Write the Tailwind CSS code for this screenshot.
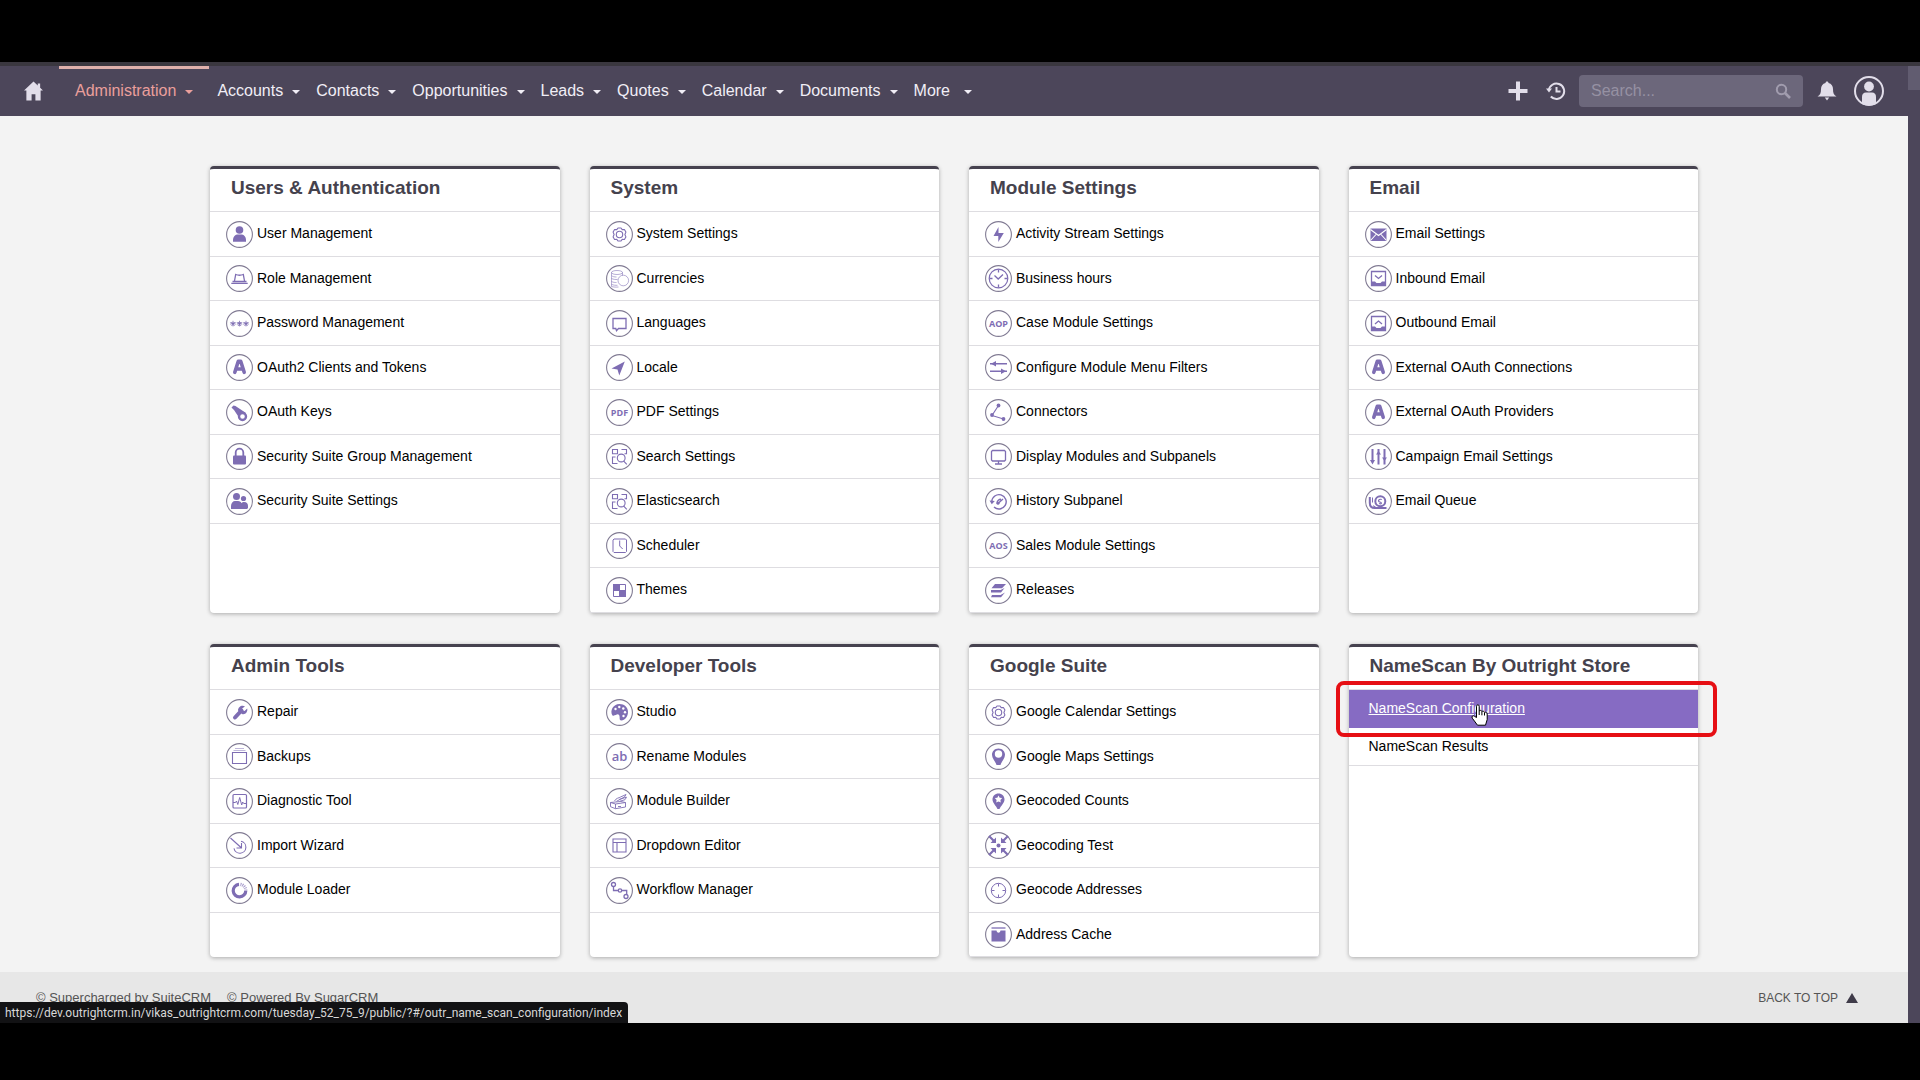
<!DOCTYPE html>
<html lang="en">

<head>
  <meta charset="UTF-8">
  <meta name="viewport" content="width=device-width, initial-scale=1.0">
  <title>Administration</title>
  <script src="https://cdn.jsdelivr.net/npm/@tailwindcss/browser@4"></script>
</head>

<body class="min-h-screen bg-black pt-[62px] pb-[57px] flex flex-col font-['Liberation_Sans',Arial,sans-serif]">

  <!-- Icons -->
  <svg class="hidden" xmlns="http://www.w3.org/2000/svg">
    <symbol id="user" viewBox="0 0 27 27"><circle cx="13.5" cy="9" r="3.8" fill="currentColor"/><path d="M7 20.8v-2c0-3 2-5 4-5.300h5c2 .3 4 2.300 4 5.300v2z" fill="currentColor"/></symbol>
    <symbol id="role" viewBox="0 0 27 27"><path d="M8.300 17l1.400-7.500c2 .8 5.600.8 7.600 0l1.400 7.500M5.300 18.300h16.400M6.500 16.500h14" fill="none" stroke="currentColor" stroke-width="1.300"/></symbol>
    <symbol id="password" viewBox="0 0 27 27"><path d="M7 10.800v5.600M4.300 12.600l5.400 1.600M9.700 12.600l-5.400 1.600M5.500 16l3-4M8.500 16l-3-4M13.500 10.800v5.600M10.800 12.600l5.400 1.600M16.200 12.600l-5.400 1.600M12 16l3-4M15 16l-3-4M20 10.800v5.600M17.300 12.600l5.400 1.600M22.700 12.600l-5.400 1.600M18.500 16l3-4M21.500 16l-3-4" fill="none" stroke="currentColor" stroke-width=".8"/></symbol>
    <symbol id="oauth" viewBox="0 0 27 27"><path d="M8.800 18.300L12.300 7.300h2.400l3.500 11M10.500 15h6" fill="none" stroke="currentColor" stroke-width="3.600" stroke-linecap="round" stroke-linejoin="round"/></symbol>
    <symbol id="key" viewBox="0 0 27 27"><path d="M5.500 8.500l2-2 2 .5L20 14l-6 6-6-9z" fill="currentColor"/><circle cx="16.500" cy="17.500" r="3.500" fill="white" stroke="currentColor" stroke-width="2.400"/></symbol>
    <symbol id="lock" viewBox="0 0 27 27"><rect x="7" y="12.500" width="13" height="9" rx="1" fill="currentColor"/><path d="M9.700 13V9.500a3.800 3.800 0 0 1 7.600 0V13" fill="none" stroke="currentColor" stroke-width="1.800"/></symbol>
    <symbol id="group" viewBox="0 0 27 27"><g fill="currentColor"><circle cx="10.500" cy="8.500" r="3.500"/><circle cx="17.500" cy="10.500" r="2.600"/><path d="M5 21v-3c0-3 2-5 4-5h3c2 0 3 1 3.500 2.200.8-1 1.500-1.200 2.500-1.200 3 0 4 2 4 4v2l-1 1z"/></g></symbol>
    <symbol id="gear" viewBox="0 0 27 27"><g fill="none" stroke="currentColor" stroke-width="1.100" stroke-linejoin="round"><path d="M12 7h3l1.200 1.600 2.200-.1 1.500 2.600-1 2.400 1 2.400-1.500 2.600-2.200-.1L15 20h-3l-1.200-1.600-2.200.1-1.500-2.600 1-2.400-1-2.400 1.500-2.600 2.200.1z"/><circle cx="13.500" cy="13.500" r="3.200"/></g></symbol>
    <symbol id="coins" viewBox="0 0 27 27"><g fill="none" stroke="currentColor" stroke-width=".7" stroke-opacity=".8"><ellipse cx="11" cy="7.500" rx="5.500" ry="2"/><path d="M5.500 7.500v3c1 1.200 3 1.500 5 1.500M5.500 10.500v11M16.500 7.500v3M5.500 13.500c2 1 4 1 6 1M5.500 16.500c2 1 3.500 1 5 1M5.500 19.300c2 1 4 1 6 1M5.500 21.500c2 .7 5 .7 7 .5"/><circle cx="17.300" cy="15.500" r="5.300"/></g></symbol>
    <symbol id="speech" viewBox="0 0 27 27"><path d="M7 8.500h13v10h-7.500l-2 2.300-.7-2.300H7z" fill="none" stroke="currentColor" stroke-width="1.300"/></symbol>
    <symbol id="locale" viewBox="0 0 27 27"><path d="M18.800 7.500L5.500 14.500l6 1 1.800 6z" fill="currentColor"/></symbol>
    <symbol id="pdf" viewBox="0 0 27 27"><text x="13.500" y="16.700" font-family="Open Sans" font-weight="700" font-size="9" text-anchor="middle" fill="currentColor">PDF</text></symbol>
    <symbol id="search-grid" viewBox="0 0 27 27"><g fill="none" stroke="currentColor" stroke-width="1.100"><path d="M6.500 6.500h5v4.300h-5zM15.500 6.500h5v4.300h-2M9.500 14h-3v6.500h5M17.500 17.800l3.300 3.500"/><circle cx="15.200" cy="15" r="3.900"/></g></symbol>
    <symbol id="scheduler" viewBox="0 0 27 27"><path d="M8 7h11.500l1 1v11.500l-1 1H8l-1-1V8zM13.700 8.500V14l3 3" fill="none" stroke="currentColor"/></symbol>
    <symbol id="themes" viewBox="0 0 27 27"><path d="M7.500 7.500h12v12h-12zM13.500 7.500v12M7.500 13.500h12" fill="none" stroke="currentColor"/><path d="M7 7h6.500v6.500H7zM13.500 13.500H20V20h-6.500z" fill="currentColor"/></symbol>
    <symbol id="bolt" viewBox="0 0 27 27"><path d="M13.500 6L8.500 15h4.800v6L18.800 12h-5.300z" fill="currentColor"/></symbol>
    <symbol id="hours" viewBox="0 0 27 27"><g fill="none" stroke="currentColor"><circle cx="13.500" cy="13.500" r="9.300" stroke-width="1.200"/><path d="M9.500 10.500l3.700 3.500 4.800-4.500M13.500 4.500v3M13.500 19.500v3M4.500 13.500h3M19.500 13.500h3" stroke-width="1.300"/></g></symbol>
    <symbol id="aop" viewBox="0 0 27 27"><text x="13.500" y="16.700" font-family="Open Sans" font-weight="700" font-size="9" text-anchor="middle" fill="currentColor">AOP</text></symbol>
    <symbol id="filters" viewBox="0 0 27 27"><path d="M5 9.700h17M5 17.300h17" stroke="currentColor" stroke-width="1.500"/><path d="M6 9.700l5-2.700v5.400zM21 17.300l-5-2.700V20z" fill="currentColor"/></symbol>
    <symbol id="connectors" viewBox="0 0 27 27"><path d="M13.500 6.500l-6.500 10 11.500 3.500" fill="none" stroke="currentColor" stroke-width="1.100"/><g fill="currentColor"><circle cx="13.500" cy="6.500" r="1.900"/><circle cx="7" cy="16" r="1.900"/><circle cx="18.500" cy="20" r="1.900"/></g></symbol>
    <symbol id="display" viewBox="0 0 27 27"><path d="M7.500 7.500h12l1 1V17l-1 1h-12l-1-1V8.500zM13.500 18v3M10 21h7" fill="none" stroke="currentColor" stroke-width="1.300"/></symbol>
    <symbol id="history" viewBox="0 0 27 27"><path d="M6.800 13.500a7.200 7.200 0 1 1 2.200 5.500M13.500 15l4.500-4M16 11.300a4 4 0 0 0-4 4.200" fill="none" stroke="currentColor" stroke-width="1.400"/><path d="M4.500 12.500l2.300 3.700 3-3.200z" fill="currentColor"/><circle cx="13" cy="15.300" r="1.500" fill="currentColor"/></symbol>
    <symbol id="aos" viewBox="0 0 27 27"><text x="13.500" y="16.700" font-family="Open Sans" font-weight="700" font-size="9" text-anchor="middle" fill="currentColor">AOS</text></symbol>
    <symbol id="releases" viewBox="0 0 27 27"><path d="M10 7h11l-4 4.300H6.500zM6 13h9.500l4-2-3.500 4.500H6zM7 18h8.500l4.500-2.500L16 20.300H6z" fill="currentColor"/></symbol>
    <symbol id="mail" viewBox="0 0 27 27"><rect x="5.500" y="7.500" width="16" height="12.500" fill="currentColor"/><path d="M5.500 8.500l8 6 8-6M5.500 19.500l5.500-6M21.500 19.500l-5.500-6" fill="none" stroke="white" stroke-width="1.100"/></symbol>
    <symbol id="inbound" viewBox="0 0 27 27"><path d="M6.500 6.500h14v14h-14zM10 10.500l3.500 3 3.500-3" fill="none" stroke="currentColor" stroke-width="1.300"/><path d="M6 16.500h4l1.500 1.500h4l1.500-1.500h4V21H6z" fill="currentColor"/></symbol>
    <symbol id="outbound" viewBox="0 0 27 27"><path d="M6.500 6.500h14v14h-14zM10 14l3.500-3 3.500 3" fill="none" stroke="currentColor" stroke-width="1.300"/><path d="M6 16.500h4l1.500 1.500h4l1.500-1.500h4V21H6z" fill="currentColor"/></symbol>
    <symbol id="sliders" viewBox="0 0 27 27"><path d="M7.500 6v12M13.500 6v15.500M19.500 6v15.500" stroke="currentColor" stroke-width="2"/><path d="M5 17h5l-2.500 4.500zM11 11.500l2.500-3.500 2.500 3.500zM17 14.500h5l-2.500 3.500z" fill="currentColor"/></symbol>
    <symbol id="snail" viewBox="0 0 27 27"><path d="M4.800 9v6c0 3 1.500 5 5 5H21" fill="none" stroke="currentColor" stroke-width="2"/><path d="M7.500 9.500v5" stroke="currentColor"/><circle cx="15.300" cy="13.300" r="5" fill="white" stroke="currentColor" stroke-width="2"/><path d="M16.800 11.500c-3-1-4.500 2-2 2.500s2 2.500-.8 1.500" fill="none" stroke="currentColor" stroke-width="1.200"/><path d="M8 17l3 2h10l1.500 1.500H9z" fill="currentColor"/></symbol>
    <symbol id="wrench" viewBox="0 0 27 27"><path d="M9 18.500l6.500-7" stroke="currentColor" stroke-width="4" stroke-linecap="round"/><path d="M19 7.200l-3 2.600.7 1.800 1.900.5 2.600-2.500c.8 3.500-2 6.400-5.200 5.400l-4-3.500C12 8 15.500 5.500 19 7.200z" fill="currentColor"/></symbol>
    <symbol id="backups" viewBox="0 0 27 27"><path d="M6.500 9.500h14V20.500h-14z" fill="none" stroke="currentColor" stroke-width="1.100"/><path d="M7.500 7.500h12M9 5.500h9" stroke="currentColor" stroke-opacity=".5"/></symbol>
    <symbol id="diagnostic" viewBox="0 0 27 27"><rect x="7" y="6.500" width="13.500" height="13.500" rx="1" fill="none" stroke="currentColor" stroke-width="1.200"/><path d="M7 14.500h2.500l1-1.500 1.300 3.500L13.700 9.500l2 7.500 1-3 1 1.500H20" fill="none" stroke="currentColor"/></symbol>
    <symbol id="import" viewBox="0 0 27 27"><path d="M4.500 6l10.500 9.500M15.500 11v5h-5M15 9.300a6 6 0 1 1-7 7" fill="none" stroke="currentColor" stroke-width="1.100"/></symbol>
    <symbol id="loader" viewBox="0 0 27 27"><path d="M13 7.300a6.300 6.300 0 1 0 6.800 6.200" fill="none" stroke="currentColor" stroke-width="3.200"/><path d="M14.500 7.400a6.300 6.300 0 0 1 5.300 5.500" fill="none" stroke="currentColor" stroke-width="3.200" stroke-dasharray="1 .9" stroke-opacity=".7"/></symbol>
    <symbol id="palette" viewBox="0 0 27 27"><path d="M13.500 5c5 0 8.500 3.500 8.500 8s-3.300 8.500-6.500 8.500c-3 0-1-3.500-2.500-5.500s-4 1.500-6.500.5C3.500 12 7 5 13.500 5z" fill="currentColor"/><g fill="white"><circle cx="9.500" cy="10" r="1.200"/><circle cx="13.300" cy="8" r="1.200"/><circle cx="17.300" cy="9.500" r="1.200"/><circle cx="19" cy="13.200" r="1.200"/><circle cx="17.500" cy="17" r="1.200"/></g></symbol>
    <symbol id="ab" viewBox="0 0 27 27"><text x="13.500" y="18.200" font-family="Open Sans" font-weight="600" font-size="13" text-anchor="middle" fill="currentColor">ab</text></symbol>
    <symbol id="builder" viewBox="0 0 27 27"><path d="M4.500 14.500l10-1 5 1v4.500l-10 1.700-5-2zM4.500 14.500l5 1.500v4.500M9.500 16l10-1.500M8.500 13c1.500-3 4.500-3 6-4l5.500-2.500-1.500 2.500-8 4.300M13 11.500l7.500-2.300-1.500 2.500-5 1.500M12 18.500h3" fill="none" stroke="currentColor" stroke-width=".9"/></symbol>
    <symbol id="dropdown" viewBox="0 0 27 27"><path d="M7 7h13v13H7zM7 10.500h13M11 10.500V20" fill="none" stroke="currentColor" stroke-width="1.100"/></symbol>
    <symbol id="workflow" viewBox="0 0 27 27"><g fill="none" stroke="currentColor" stroke-width="1.300"><circle cx="7.500" cy="7.500" r="2"/><circle cx="14" cy="13.500" r="1.700"/><circle cx="20" cy="19.500" r="2"/><path d="M7.500 9.500v4h4.800M15.700 13.500h5v4"/></g></symbol>
    <symbol id="pin" viewBox="0 0 27 27"><path d="M13.500 5.500c4 0 6.500 3 6.500 6.300 0 3.700-3.500 6.500-4.500 10.200h-4C10.500 18.300 7 15.500 7 11.800 7 8.500 9.500 5.500 13.500 5.500z" fill="currentColor"/><circle cx="13.500" cy="11" r="3.700" fill="white"/></symbol>
    <symbol id="pin-star" viewBox="0 0 27 27"><path d="M13.500 5.500c3.500 0 6 2.600 6 6 0 3.500-3.500 6-5 9.500h-2c-1.500-3.500-5-6-5-9.500 0-3.400 2.500-6 6-6z" fill="currentColor"/><path d="M13.500 7.500l1.200 2.200 2.500.4-1.800 1.800.4 2.600-2.300-1.100-2.300 1.100.4-2.600-1.800-1.800 2.500-.4z" fill="white"/></symbol>
    <symbol id="geotest" viewBox="0 0 27 27"><circle cx="13.500" cy="13.500" r="2" fill="currentColor"/><path d="M4 4l5 5M23 4l-5 5M4 23l5-5M23 23l-5-5" stroke="currentColor" stroke-width="2.200"/><path d="M11 11H5.500L11 5.500zM16 11h5.500L16 5.500zM11 16H5.500l5.500 5.500zM16 16h5.500L16 21.500z" fill="currentColor"/></symbol>
    <symbol id="target" viewBox="0 0 27 27"><g fill="none" stroke="currentColor"><circle cx="13.500" cy="13.500" r="7.200"/><path d="M13.500 6.500v3M13.500 17.500v3M6.500 13.500h3M17.500 13.500h3"/></g></symbol>
    <symbol id="cache" viewBox="0 0 27 27"><path d="M6.500 7h14" stroke="currentColor" stroke-width="1.300"/><path d="M6.500 9.500h5c.5 3 3.500 3 4 0h5v11h-14z" fill="currentColor"/></symbol>
    <symbol id="caret" viewBox="0 0 8 4"><path d="M0 0h8L4 4z" fill="currentColor"/></symbol>
  </svg>

  <div class="relative flex flex-1">
    <div class="flex flex-1 flex-col bg-[#f3f3f3]">

      <!-- Top navigation -->
      <header class="flex h-[54px] items-stretch border-t-4 border-[#3a373f] bg-[#4c465a] text-[#f1eef6]">
        <a href="#" aria-label="Home" class="flex w-[59px] items-center pl-6">
          <svg class="h-5 w-[19px]" viewBox="0 0 20 20"><path d="M10 0L0 9.500h2.500V20H8v-6.500h4V20h5.500V9.500H20L17 6.600V2h-2.500v2.300z" fill="#e2deea"/></svg>
        </a>
        <nav id="menu" class="flex items-stretch text-base"></nav>
        <div class="ml-auto flex items-center pr-6">
          <button aria-label="Create" class="mr-[18px]">
            <svg class="size-5" viewBox="0 0 20 20"><path d="M8 0.500h4V8h7.500v4H12v7.500H8V12H.5V8H8z" fill="#e2deea"/></svg>
          </button>
          <button aria-label="Recently viewed" class="mr-[13px]">
            <svg class="size-5" viewBox="0 0 20 20"><path d="M2.800 9.500a7.700 7.700 0 1 1 2 6M10.500 6v4.500h4" fill="none" stroke="#e2deea" stroke-width="2"/><path d="M0 7.500h6l-3 4z" fill="#e2deea"/></svg>
          </button>
          <div class="relative mr-[14px]">
            <input type="text" aria-label="Search" placeholder="Search..." class="h-8 w-[224px] rounded bg-[#6c677b] pl-3 pr-10 text-base text-white placeholder:text-[#9691a3]">
            <svg class="absolute top-2 right-3 size-4" viewBox="0 0 16 16"><circle cx="6.500" cy="6.500" r="4.700" fill="none" stroke="#a19cae" stroke-width="2"/><path d="M10 10l5 5" stroke="#a19cae" stroke-width="2.600"/></svg>
          </div>
          <button aria-label="Notifications" class="mr-[17px]">
            <svg class="size-5" viewBox="0 0 20 20"><path d="M10 .5c1 0 1.500.7 1.500 1.500C14.500 2.700 16 5 16 8c0 4 .8 6 3.500 7.500H.5C3.200 14 4 12 4 8c0-3 1.500-5.300 4.500-6C8.500 1.200 9 .5 10 .5zM7.800 16.500h4.400L10 19.500z" fill="#e2deea"/></svg>
          </button>
          <button aria-label="Profile">
            <svg class="size-[30px]" viewBox="0 0 30 30"><circle cx="15" cy="15" r="14" fill="none" stroke="#e2deea" stroke-width="2"/><circle cx="15" cy="10.500" r="4.900" fill="#e2deea"/><path d="M8 28v-7c0-3 1.500-4.500 4-4.500h6c2.500 0 4 1.500 4 4.500v7c-4 2-10 2-14 0z" fill="#e2deea"/></svg>
          </button>
        </div>
      </header>

      <!-- Admin panels -->
      <main id="panels" class="grid grid-cols-4 gap-x-[30px] gap-y-[31px] px-[210px] pt-[50px] pb-[15px]"></main>

      <footer class="flex flex-1 items-center bg-[#e7e7e7] pl-9 pr-[50px] text-[13px] text-[#555]">
        <a href="#">© Supercharged by SuiteCRM</a>
        <a href="#" class="ml-4">© Powered By SugarCRM</a>
        <a href="#" class="ml-auto flex items-center gap-2 text-xs">BACK TO TOP
          <svg class="h-[10px] w-3" viewBox="0 0 12 10"><path d="M6 0l6 10H0z" fill="#3f3b49"/></svg>
        </a>
      </footer>
    </div>

    <!-- Scrollbar -->
    <div class="w-3 border-t-4 border-[#3a373f] bg-[#4c465a]">
      <div class="h-6 bg-[#615c70]"></div>
    </div>

    <!-- Link preview -->
    <div class="absolute bottom-0 left-0 h-[21px] rounded-tr bg-[#121214] pl-[5px] pr-[6px] font-['Roboto',sans-serif] text-xs leading-[22px] text-[#d8d8d8]">https://dev.outrightcrm.in/vikas_outrightcrm.com/tuesday_52_75_9/public/?#/outr_name_scan_configuration/index</div>
  </div>

  <script>
    const menu = ["Administration", "Accounts", "Contacts", "Opportunities", "Leads", "Quotes", "Calendar", "Documents"];

    const panels = [
      { title: "Users & Authentication", items: [["user", "User Management"], ["role", "Role Management"], ["password", "Password Management"], ["oauth", "OAuth2 Clients and Tokens"], ["key", "OAuth Keys"], ["lock", "Security Suite Group Management"], ["group", "Security Suite Settings"]] },
      { title: "System", items: [["gear", "System Settings"], ["coins", "Currencies"], ["speech", "Languages"], ["locale", "Locale"], ["pdf", "PDF Settings"], ["search-grid", "Search Settings"], ["search-grid", "Elasticsearch"], ["scheduler", "Scheduler"], ["themes", "Themes"]] },
      { title: "Module Settings", items: [["bolt", "Activity Stream Settings"], ["hours", "Business hours"], ["aop", "Case Module Settings"], ["filters", "Configure Module Menu Filters"], ["connectors", "Connectors"], ["display", "Display Modules and Subpanels"], ["history", "History Subpanel"], ["aos", "Sales Module Settings"], ["releases", "Releases"]] },
      { title: "Email", items: [["mail", "Email Settings"], ["inbound", "Inbound Email"], ["outbound", "Outbound Email"], ["oauth", "External OAuth Connections"], ["oauth", "External OAuth Providers"], ["sliders", "Campaign Email Settings"], ["snail", "Email Queue"]] },
      { title: "Admin Tools", items: [["wrench", "Repair"], ["backups", "Backups"], ["diagnostic", "Diagnostic Tool"], ["import", "Import Wizard"], ["loader", "Module Loader"]] },
      { title: "Developer Tools", items: [["palette", "Studio"], ["ab", "Rename Modules"], ["builder", "Module Builder"], ["dropdown", "Dropdown Editor"], ["workflow", "Workflow Manager"]] },
      { title: "Google Suite", items: [["gear", "Google Calendar Settings"], ["pin", "Google Maps Settings"], ["pin-star", "Geocoded Counts"], ["geotest", "Geocoding Test"], ["target", "Geocode Addresses"], ["cache", "Address Cache"]] },
      { title: "NameScan By Outright Store", items: [["", "NameScan Configuration"], ["", "NameScan Results"]] },
    ];

    const caret = `<svg class="mt-0.5 h-1 w-2"><use href="#caret"/></svg>`;

    document.getElementById("menu").innerHTML = menu.map((name, i) => {
      if (i === 0) {
        return `<a href="#" class="mr-2 flex items-center gap-[9px] border-t-3 border-[#dfb0ac] px-4 pb-[3px] text-[#ea9f9c]">${name}${caret}</a>`;
      }
      return `<a href="#" class="mr-4 flex items-center gap-[9px]">${name}${caret}</a>`;
    }).join("") + `<button class="flex items-center gap-[14px]">More${caret}</button>`;

    // Highlight frame and hand pointer drawn over the hovered link
    const highlight = `
      <span class="pointer-events-none absolute -top-[9px] -right-[19px] -bottom-[9px] -left-[13px] rounded-lg border-4 border-[#e60f14]"></span>
      <svg class="pointer-events-none absolute top-[14px] left-[122px] h-[22px] w-[18px]" viewBox="0 0 18 22"><path d="M5.500 13.500V2.200c0-1.900 2.700-1.900 2.700 0V7c.5-1 2.600-.8 2.700.7.600-.9 2.500-.6 2.600.9.800-.8 2.700-.3 2.700 1.400v5.500l-1.700 5.700H6.500L1.300 14.200c-1.200-1.800.8-3.200 2.200-1.900z" fill="white" stroke="black"/><path d="M8.200 7v4M10.900 8v3.300M13.500 9v2.500" stroke="black"/></svg>`;

    const iconRow = ([icon, label]) => `
      <li class="border-b border-[#dedde1] odd:h-[45px] even:h-11">
        <a href="#" class="flex h-full items-center gap-1 pl-4">
          <svg class="size-[27px] text-[#7e6db3]" viewBox="0 0 27 27"><circle cx="13.5" cy="13.5" r="12.9" fill="none" stroke="#827c94" stroke-width="1.100"/><use href="#${icon}" width="27" height="27"/></svg>
          <span class="pb-0.5">${label}</span>
        </a>
      </li>`;

    const plainRow = ([, label], i) => i === 0
      ? `<li class="relative h-[38px] bg-[#866bc3] text-white"><a href="#" class="flex h-full items-center pl-5 pb-0.5 underline">${label}</a>${highlight}</li>`
      : `<li class="h-[38px] border-b border-[#dedde1]"><a href="#" class="flex h-full items-center pl-5 pb-0.5">${label}</a></li>`;

    document.getElementById("panels").innerHTML = panels.map(({ title, items }) => `
      <section class="rounded border-t-3 border-[#46424f] bg-white shadow-[0_1px_4px_rgba(0,0,0,0.3)]">
        <h2 class="flex h-[43px] items-center border-b border-[#dedde1] pb-[3px] pl-[21px] text-[19px] font-bold text-[#45424d]">${title.replace("&", "&amp;")}</h2>
        <ul class="text-sm text-black">${items.map(items[0][0] ? iconRow : plainRow).join("")}</ul>
      </section>`).join("");
  </script>
</body>

</html>
